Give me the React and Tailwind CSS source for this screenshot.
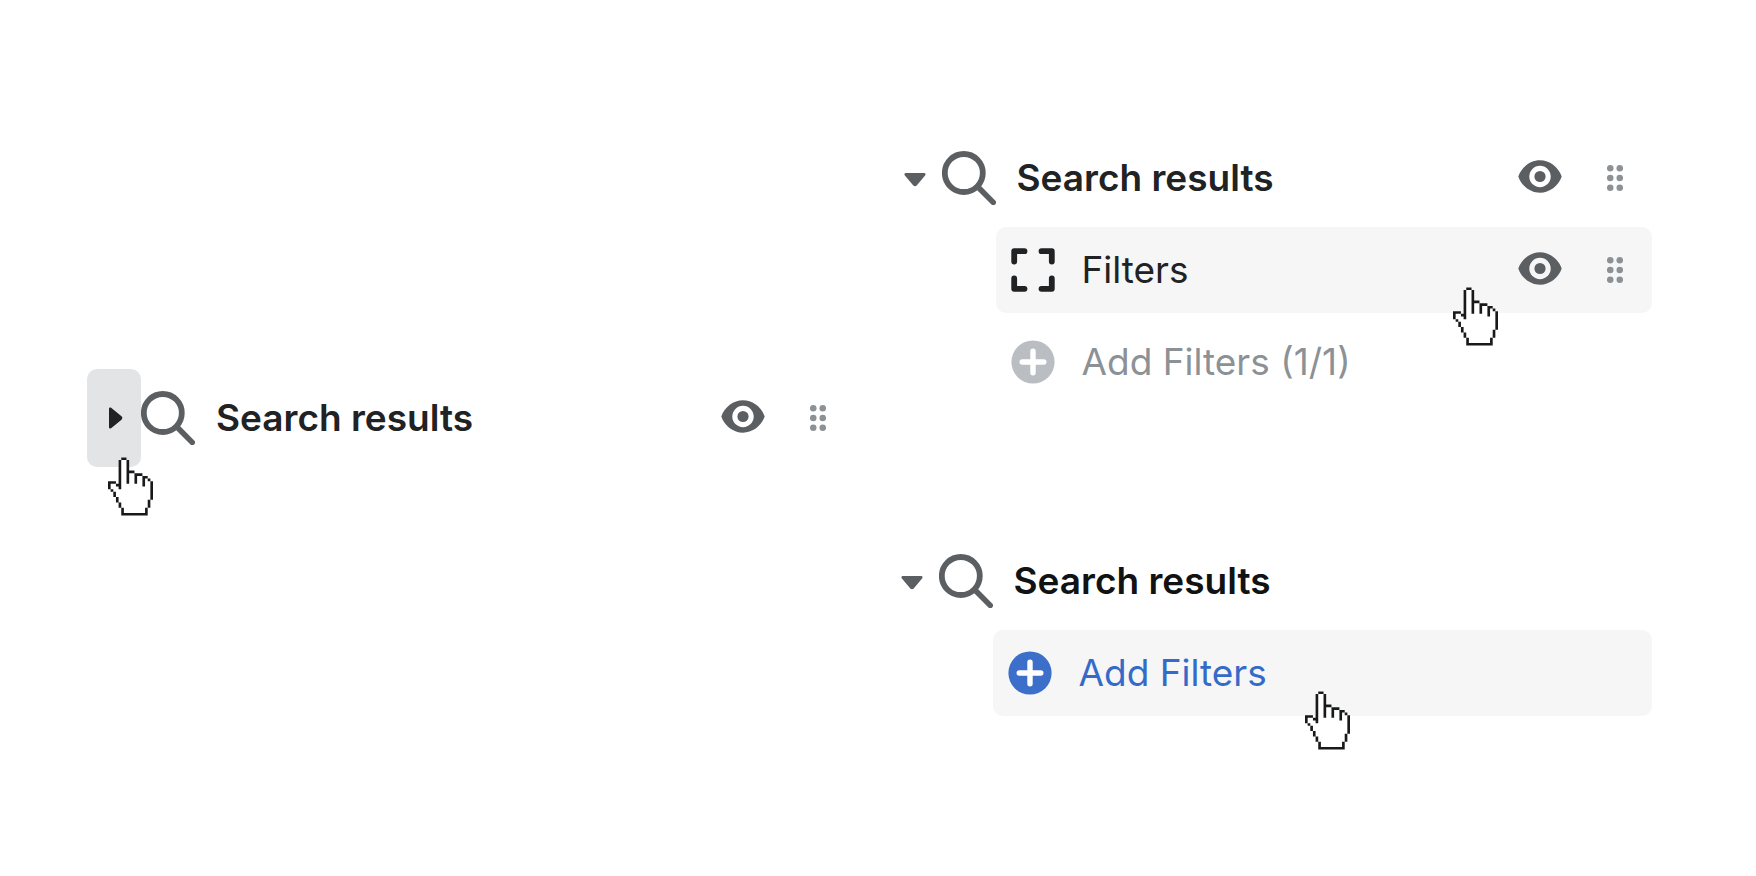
import React from 'react';

const SearchIcon = () => (
  <svg className="w-[54px] h-[54px] shrink-0 text-[#5c5f62]" viewBox="0 0 54 54" fill="none" stroke="currentColor" strokeLinecap="round" aria-hidden="true">
    <circle cx="21.8" cy="22" r="19" strokeWidth="5.8" />
    <path d="M36 36 51.2 51.4" strokeWidth="5.6" />
  </svg>
);

const EyeIcon = () => (
  <svg className="w-11 h-11" viewBox="0 0 44 44" fill="currentColor" fillRule="evenodd" aria-hidden="true">
    <path d="M.3 20.5C3.500 11 12.500 4.300 22 4.300S40.500 11 43.700 20.500C40.500 30 31.500 36.700 22 36.700S3.500 30 .3 20.500ZM22 31.200a10.700 10.700 0 1 0 0-21.400 10.700 10.700 0 0 0 0 21.400Z" />
    <circle cx="22" cy="20.5" r="5.6" />
  </svg>
);

const DragIcon = () => (
  <svg className="w-4 h-7" viewBox="0 0 16 28" fill="currentColor" aria-hidden="true">
    {[4.2, 14, 23.8].map((y) => (
      <g key={y}>
        <circle cx="3.2" cy={y} r="3.3" />
        <circle cx="12.8" cy={y} r="3.3" />
      </g>
    ))}
  </svg>
);

const SectionIcon = () => (
  <svg className="w-11 h-11 shrink-0" viewBox="0 0 44 44" fill="none" stroke="currentColor" strokeWidth="5.8" strokeLinecap="round" strokeLinejoin="round" aria-hidden="true">
    <path d="M13.500 3.200H3.200V13.500M30.500 3.200H40.800V13.500M40.800 30.500V40.800H30.500M13.500 40.800H3.200V30.500" />
  </svg>
);

const PlusIcon = ({ className }) => (
  <svg className={`w-11 h-11 shrink-0 ${className}`} viewBox="0 0 44 44" aria-hidden="true">
    <circle cx="22" cy="22" r="21.600" fill="currentColor" />
    <path d="M22 11.200V32.800M11.200 22H32.800" className="stroke-white" strokeWidth="5.4" strokeLinecap="round" />
  </svg>
);

const HandCursor = ({ className }) => (
  <svg className={`absolute z-10 w-[45px] h-[59px] pointer-events-none ${className}`} viewBox="0 0 17 22" aria-hidden="true">
    <path
      fill="#fff"
      d="M5 0h2v1h1v4h2v1h3v1h2v1h1v1h1v7h-1v3h-1v3H5v-3H4v-2H3v-2H2v-2H1v-1H0V9h3v1h1V1h1z"
    />
    <path
      fill="#18191a"
      d="M5 0h2v1H5zM4 1h1v11H4zM7 1h1v9H7zM8 5h2v1H8zM10 6h3v1h-2v3h-1zM13 7h2v1h-1v3h-1zM15 8h1v1h-1zM16 9h1v7h-1zM15 16h1v3h-1zM14 19h1v3H5v-3h1v2h8zM4 17h1v2H4zM3 15h1v2H3zM2 13h1v2H2zM1 12h1v1H1zM0 9h3v1H1v2H0zM3 10h1v1H3z"
    />
  </svg>
);

const RowActions = ({ name }) => (
  <div className="ml-auto flex items-center gap-[45px] pr-[29px]">
    <button type="button" aria-label={`Hide ${name}`} className="text-[#5c5f62]">
      <EyeIcon />
    </button>
    <button type="button" aria-label={`Move ${name}`} className="text-[#8c9196]">
      <DragIcon />
    </button>
  </div>
);

const Toggle = ({ open }) => (
  <button
    type="button"
    aria-label="Toggle Search results"
    aria-expanded={open}
    className={
      open
        ? 'w-[54px] h-[86px] shrink-0 flex items-center justify-center text-[#5c5f62]'
        : 'w-[54px] h-[98px] shrink-0 flex items-center justify-center rounded-[10px] bg-[#e3e4e6] text-[#202223]'
    }
  >
    <svg className={open ? 'w-[22px] h-[22px]' : 'w-[22px] h-[22px] -rotate-90'} viewBox="0 0 22 22" fill="currentColor" aria-hidden="true">
      <path d="M1.800 6H20.200C21.500 6 22 7.500 21.100 8.400L12.700 18.500C11.800 19.600 10.200 19.600 9.300 18.500L.9 8.400C0 7.500.5 6 1.800 6Z" />
    </svg>
  </button>
);

const SectionHeader = ({ open, actions, className = 'text-[#202223]', children }) => (
  <div className="flex items-center">
    <div className="relative">
      <Toggle open={open} />
      {children}
    </div>
    <SearchIcon />
    <h2 className={`ml-[21px] text-[37px] leading-[44px] font-semibold whitespace-nowrap ${className}`}>Search results</h2>
    {actions && <RowActions name="Search results" />}
  </div>
);

const App = () => {
  return (
    <main className="min-h-screen bg-white grid grid-cols-2 gap-[30px] pl-[87px] pr-[104px] font-['Inter',sans-serif] text-[37px] leading-[44px]">
      {/* Collapsed section */}
      <section className="pt-[369px]">
        <SectionHeader open={false} actions>
          <HandCursor className="left-[21px] top-[88px]" />
        </SectionHeader>
      </section>

      <div className="pt-[135px] pb-10 flex flex-col gap-[133px]">
        {/* Expanded section, block limit reached */}
        <section className="pl-[3px] flex flex-col gap-1.5">
          <SectionHeader open actions />
          <div className="relative ml-[108px] h-[86px] flex items-center pl-[15px] rounded-[10px] bg-[#f6f6f6] text-[#202223]">
            <SectionIcon />
            <span className="ml-[27px]">Filters</span>
            <RowActions name="Filters" />
            <HandCursor className="right-[154px] top-[60px]" />
          </div>
          <button type="button" disabled className="ml-[108px] h-[86px] flex items-center pl-[15px] rounded-[10px] text-[#8c9196]">
            <PlusIcon className="text-[#babec3]" />
            <span className="ml-[27px]">Add Filters (1/1)</span>
          </button>
        </section>

        {/* Expanded section, empty */}
        <section className="flex flex-col gap-1.5">
          <SectionHeader open className="text-[#111213]" />
          <button type="button" className="relative ml-[108px] h-[86px] flex items-center pl-[15px] rounded-[10px] bg-[#f6f6f6] text-[#356bc8]">
            <PlusIcon className="text-[#3b6fc9]" />
            <span className="ml-[27px]">Add Filters</span>
            <HandCursor className="left-[312px] top-[61px]" />
          </button>
        </section>
      </div>
    </main>
  );
};

export default App;
